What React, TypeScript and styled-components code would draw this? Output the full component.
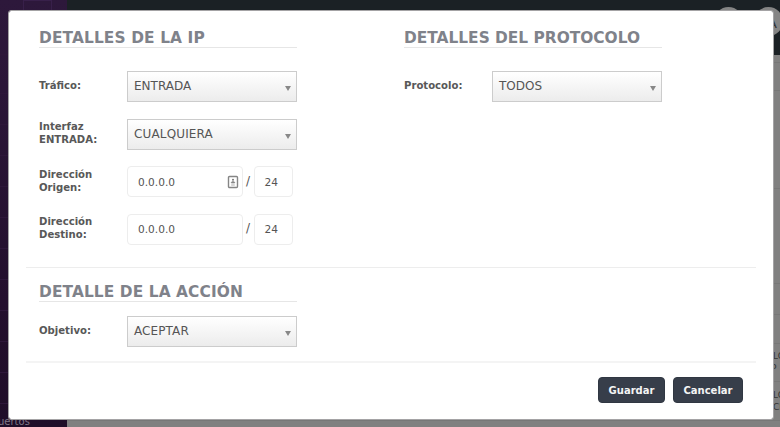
import React from "react";
import styled, { createGlobalStyle } from "styled-components";

const GlobalStyle = createGlobalStyle`
  * { box-sizing: border-box; }
  html, body { margin: 0; padding: 0; overflow: hidden; }
  body { font-family: "DejaVu Sans", Verdana, sans-serif; color: #555; }
`;

const Page = styled.div`
  position: relative;
  display: grid;
  grid-template-columns: 67px 1fr;
  width: 780px;
  height: 427px;
  overflow: hidden;
  background: #808080;
`;

const Sidebar = styled.aside`
  display: flex;
  flex-direction: column;
  height: 427px;
  background: linear-gradient(#2d183b 0, #2b1638 90px, #230f2d 300px, #200e29 427px);
`;

const MenuToggle = styled.div`
  width: 29px;
  height: 29px;
  margin-left: 23px;
  padding: 9px 7px;
  border: 1px solid #38204a;
  flex-shrink: 0;
`;

const MenuBar = styled.div`
  height: 2px;
  margin: 0 1px;
  background: #77717a;
`;

const SideItem = styled.div<{ $height: number }>`
  height: ${(p) => p.$height}px;
  flex-shrink: 0;
  border-bottom: 1px solid #2e173a;
`;

const SideLink = styled.div`
  margin-left: -2px;
  padding-top: 11px;
  font-size: 10px;
  line-height: 13px;
  color: #817887;
  white-space: nowrap;
`;

const Main = styled.main`
  display: flex;
  flex-direction: column;
`;

const TopBar = styled.header`
  display: flex;
  justify-content: flex-end;
  gap: 14px;
  height: 55px;
  padding-top: 7px;
  background: #1b2125;
  flex-shrink: 0;
`;

const Avatar = styled.div`
  width: 29px;
  height: 29px;
  margin-right: -3px;
  border-radius: 50%;
  background: #858585;
  font-size: 13px;
  line-height: 33px;
  text-align: right;
  padding-right: 6px;
  color: #333;
`;

const PageRow = styled.div<{ $height: number }>`
  height: ${(p) => p.$height}px;
  border-bottom: 1px solid #777;
  flex-shrink: 0;
  display: flex;
  flex-direction: column;
  align-items: flex-end;
  justify-content: flex-end;
  padding-bottom: 7px;
  font-size: 9px;
  line-height: 12px;
  color: #343434;
`;

const Clip = styled.div<{ $width?: number }>`
  width: ${(p) => p.$width ?? 7}px;
  height: 12px;
  white-space: nowrap;
`;

const Modal = styled.section`
  position: absolute;
  left: 8px;
  top: 10px;
  width: 766px;
  height: 410px;
  padding: 0 18px;
  background: #fff;
  border: 1px solid #a4a3a5;
  border-radius: 3px;
  background-clip: padding-box;
`;

const Columns = styled.div`
  display: grid;
  grid-template-columns: 258px 258px;
  column-gap: 107px;
  height: 256px;
  padding: 18px 0 0 12px;
`;

const ActionSection = styled.div`
  width: 270px;
  height: 93px;
  padding: 15px 0 0 12px;
`;

const Divider = styled.hr<{ $soft?: boolean }>`
  height: ${(p) => (p.$soft ? 2 : 1)}px;
  margin: 0 -1px 0 -1px;
  border: 0;
  background: ${(p) => (p.$soft ? "#f4f4f4" : "#ededed")};
`;

const Heading = styled.h2<{ $gap: number; $tracking: number }>`
  height: 19px;
  margin: 0 0 ${(p) => p.$gap}px;
  border-bottom: 1px solid #e6e6e6;
  font-size: 15.4px;
  line-height: 18px;
  font-weight: bold;
  letter-spacing: ${(p) => p.$tracking}px;
  color: #7f828a;
  white-space: nowrap;
`;

const Field = styled.div`
  display: grid;
  grid-template-columns: 88px 170px;
  align-items: center;
  height: 30px;
  margin-bottom: 17.6px;
`;

const Label = styled.label`
  margin-top: -2px;
  font-size: 10.1px;
  line-height: 13px;
  font-weight: bold;
  color: #585858;
  white-space: pre-line;
`;

const Select = styled.div`
  display: flex;
  justify-content: space-between;
  align-items: center;
  height: 31px;
  padding: 0 5px 0 6px;
  border: 1px solid #ccc;
  background: linear-gradient(#fff, #ececec);
  color: #555;
`;

const SelectText = styled.span<{ $tracking: number }>`
  font-size: 12px;
  line-height: 29px;
  letter-spacing: ${(p) => p.$tracking}px;
`;

const Caret = styled.span`
  margin-top: 4px;
  border: 3px solid transparent;
  border-top: 5px solid #888;
  border-bottom: 0;
`;

const AddressGroup = styled.div`
  display: flex;
  align-items: center;
`;

const InputBox = styled.div<{ $width: number }>`
  display: flex;
  align-items: center;
  justify-content: space-between;
  width: ${(p) => p.$width}px;
  height: 31px;
  padding: 0 3px 0 10px;
  border: 1px solid #ededed;
  border-radius: 4px;
  font-size: 10.6px;
  color: #555;
`;

const Slash = styled.span`
  width: 11px;
  margin-top: -2px;
  font-size: 12px;
  text-align: center;
`;

const Actions = styled.footer`
  display: flex;
  justify-content: flex-end;
  gap: 8px;
  padding: 14px 12px 0 0;
`;

const Button = styled.button<{ $width: number }>`
  width: ${(p) => p.$width}px;
  height: 26px;
  padding: 1px 0 0;
  border: 1px solid #303742;
  border-radius: 4px;
  background: #373e4a;
  color: #f4f4f4;
  font-family: "DejaVu Sans", Verdana, sans-serif;
  font-size: 10px;
  font-weight: bold;
  line-height: 23px;
`;

const ContactIcon = () => (
  <svg width="12" height="14" viewBox="0 0 12 14" fill="none">
    <rect x="1.5" y="1.5" width="9" height="11" rx="1" stroke="#858585" strokeWidth="1.4" />
    <circle cx="6" cy="4.7" r="1" fill="#777" />
    <path d="M4.3 8V7.2q1.7-1.6 3.4 0V8zM4.2 10h3.6" fill="#888" stroke="#888" strokeWidth=".7" />
  </svg>
);

type SelectFieldProps = { label: string; value: string; tracking?: number };

const SelectField = ({ label, value, tracking = 0 }: SelectFieldProps) => (
  <Field>
    <Label>{label}</Label>
    <Select>
      <SelectText $tracking={tracking}>{value}</SelectText>
      <Caret />
    </Select>
  </Field>
);

const AddressField = ({ label, icon }: { label: string; icon?: boolean }) => (
  <Field>
    <Label>{label}</Label>
    <AddressGroup>
      <InputBox $width={115.5}>
        <span>0.0.0.0</span>
        {icon && <ContactIcon />}
      </InputBox>
      <Slash>/</Slash>
      <InputBox $width={39.5}>24</InputBox>
    </AddressGroup>
  </Field>
);

const sideItemHeights = [26, 39, 31, 31, 31, 31, 31, 31, 31, 31, 31, 31];

export default function App() {
  return (
    <>
      <GlobalStyle />
      <Page>
        <Sidebar>
          <MenuToggle>
            <MenuBar />
          </MenuToggle>
          {sideItemHeights.map((height, i) => (
            <SideItem key={i} $height={height} />
          ))}
          <SideLink>uertos</SideLink>
        </Sidebar>
        <Main>
          <TopBar>
            <Avatar />
            <Avatar>A</Avatar>
          </TopBar>
          <PageRow $height={8} />
          <PageRow $height={28} />
          <PageRow $height={98} />
          <PageRow $height={95} />
          <PageRow $height={31} />
          <PageRow $height={29} />
          <PageRow $height={38}>
            <Clip>LO</Clip>
            <Clip $width={9}>P</Clip>
          </PageRow>
          <PageRow $height={39}>
            <Clip>LO</Clip>
            <Clip>CI</Clip>
          </PageRow>
        </Main>
        <Modal>
          <Columns>
            <div>
              <Heading $gap={23} $tracking={0.12}>DETALLES DE LA IP</Heading>
              <SelectField label="Tráfico:" value="ENTRADA" />
              <SelectField label={"Interfaz\nENTRADA:"} value="CUALQUIERA" tracking={0.15} />
              <AddressField label={"Dirección\nOrigen:"} icon />
              <AddressField label={"Dirección\nDestino:"} />
            </div>
            <div>
              <Heading $gap={23} $tracking={0}>DETALLES DEL PROTOCOLO</Heading>
              <SelectField label="Protocolo:" value="TODOS" />
            </div>
          </Columns>
          <Divider />
          <ActionSection>
            <Heading $gap={14} $tracking={0.1}>DETALLE DE LA ACCIÓN</Heading>
            <SelectField label="Objetivo:" value="ACEPTAR" tracking={0.1} />
          </ActionSection>
          <Divider $soft />
          <Actions>
            <Button $width={67}>Guardar</Button>
            <Button $width={70}>Cancelar</Button>
          </Actions>
        </Modal>
      </Page>
    </>
  );
}
